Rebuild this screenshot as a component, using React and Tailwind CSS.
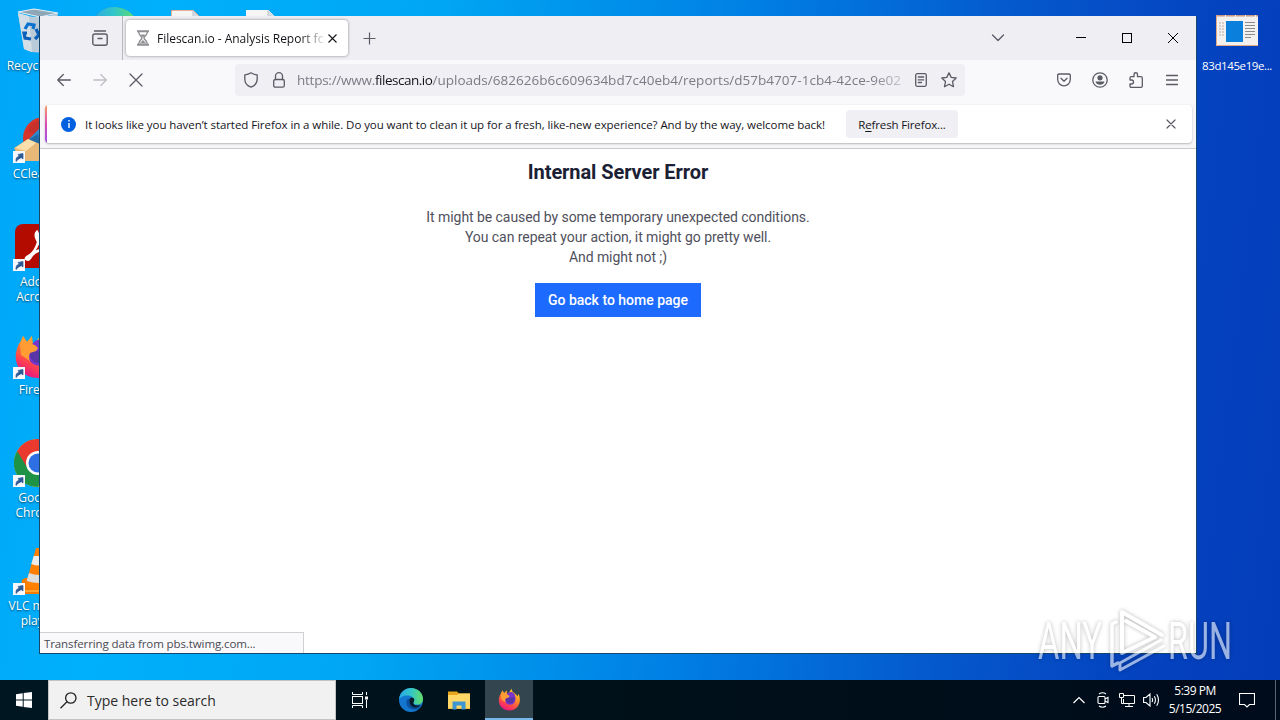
const ShortcutArrow = () => (
  <svg className="absolute -left-px bottom-0 w-3 h-3" viewBox="0 0 12 12">
    <rect width="12" height="12" fill="#f4f7fb" />
    <path d="M3 10.5C2.6 7.5 4 5.5 6.3 5L5 3.5 10 2.5V8L8.5 6.8C6.5 7 5 8.5 3 10.5Z" fill="#2c5a94" stroke="#2c5a94" strokeWidth="0.7" />
  </svg>
);

const RecycleBinArt = () => (
  <svg className="w-12 h-12" viewBox="0 0 48 48">
    <path d="M4 6L10 42Q24 49 38 42L44 6Q24 14 4 6Z" fill="#b9cbd8" />
    <path d="M4 6L10 42Q14 44 18 45L15 9Z" fill="#d3dee6" />
    <path d="M4 5L20 2 44 6 26 10Z" fill="#8ea6b5" stroke="#e5edf2" strokeWidth="1.2" />
    <path d="M11 22l3-5 6 1-1 4" fill="none" stroke="#0b73cf" strokeWidth="3.2" />
    <path d="M22 22l3 6-4 4M17 32l-6-1-1-5 3 0" fill="none" stroke="#0b5fb8" strokeWidth="3.2" />
  </svg>
);

const CCleanerArt = () => (
  <svg className="w-12 h-12" viewBox="0 0 48 48">
    <circle cx="30" cy="23" r="21" fill="#d7352b" />
    <path d="M13 16Q19 5 30 4L32 12 20 19Z" fill="#c8302b" />
    <path d="M13 26L27 12 37 15 27 34Z" fill="#2b8bd0" />
    <path d="M13 26L24 19 27 34Z" fill="#216aa8" />
    <path d="M0 33L14 24 26 29 34 41 30 46H10Q2 38 0 33Z" fill="#e8b878" />
    <path d="M1 33L14 24 22 28 12 36Z" fill="#fbdfad" />
  </svg>
);

const AcrobatArt = () => (
  <svg className="w-12 h-12" viewBox="0 0 48 48">
    <rect x="1" y="1" width="46" height="44" rx="8" fill="#b30b00" />
    <path d="M13 34C20 31 28 18 23 9C19 13 27 27 37 29C29 24 20 28 16 35C14 38 10 36 13 34Z" fill="none" stroke="#fff" strokeWidth="2.6" />
  </svg>
);

const FirefoxArt = ({ className, id }) => (
  <svg className={className} viewBox="0 0 48 48">
    <defs>
      <linearGradient id={id} x1="0.8" y1="0" x2="0.3" y2="1">
        <stop offset="0" stopColor="#ffe226" />
        <stop offset="0.4" stopColor="#ff9124" />
        <stop offset="0.75" stopColor="#ff4050" />
        <stop offset="1" stopColor="#e31587" />
      </linearGradient>
    </defs>
    <path d="M29 1C27 8 36 10 41 17L43 12C51 31 40 47 24 47C9 47 0 35 2 22C3 16 5 12 7 10L9 5 13 11 18 5 19 13C24 10 25 5 29 1Z" fill={`url(#${id})`} />
    <path d="M17 18C17 10 25 7 30 9C37 13 38 22 35 29C31 37 20 36 16 30C12 25 14 20 17 18Z" fill="#7a35cc" />
    <path d="M16 20Q26 21 34 19Q36 28 29 32C20 34 14 27 16 20Z" fill="#5a35a8" />
    <path d="M6 13L9 5 13 11 18 5 18 13Q22 14 24 17L22 20 16 22Q14 26 16 30L7 24Z" fill="#ff9c34" />
  </svg>
);

const ChromeArt = () => (
  <svg className="w-12 h-12" viewBox="0 0 48 48">
    <circle cx="24" cy="24" r="24" fill="#fbc116" />
    <path d="M24 24L3.2 12A24 24 0 0 0 24 48L34 30Z" fill="#1e9346" />
    <path d="M24 12H44.8A24 24 0 0 0 3.2 12L14 30Z" fill="#ea3a2e" />
    <circle cx="24" cy="24" r="12" fill="#fff" />
    <circle cx="24" cy="24" r="9.5" fill="#2f6fe4" />
  </svg>
);

const VlcArt = () => (
  <svg className="w-12 h-12" viewBox="0 0 48 48">
    <path d="M11 31H39L46 47H6L8 33Z" fill="#f57c00" />
    <path d="M22 1H28L39 40Q25 45 11 40Z" fill="#ff8000" />
    <path d="M19.7 9H30.3L32.6 17Q25 20 17.3 17Z" fill="#ececec" />
    <path d="M15 26Q25 30 35 26L37.4 34Q25 38 12.6 34Z" fill="#dedede" />
    <path d="M6 43H46V45H6Z" fill="#ffa431" />
  </svg>
);

const DesktopIcon = ({ top, label, shortcut, children }) => (
  <div className={`absolute left-0 w-[76px] flex flex-col items-center ${top}`}>
    <div className="relative w-12 h-12">
      {children}
      {shortcut && <ShortcutArrow />}
    </div>
    <p className="mt-[3px] text-center text-xs leading-[15px] text-white whitespace-pre-line [text-shadow:0_1px_2px_rgba(0,0,0,0.6)]">
      {label}
    </p>
  </div>
);

const EdgeArt = ({ className, id }) => (
  <svg className={className} viewBox="0 0 48 48">
    <defs>
      <linearGradient id={id} x1="0" y1="0.3" x2="1" y2="0.3">
        <stop offset="0" stopColor="#2aa6e4" />
        <stop offset="0.5" stopColor="#32c6c9" />
        <stop offset="1" stopColor="#66dd65" />
      </linearGradient>
    </defs>
    <circle cx="24" cy="24" r="24" fill="#1477cf" />
    <path d="M0 23C2 8 12 0 24 0C38 0 48 10 48 22C48 30 42 34 35 33C29 33 27 30 30 26C30 19 24 15 16 15C8 15 2 19 0 23Z" fill={`url(#${id})`} />
    <path d="M17 22C11 31 17 43 31 43Q39 43 44 36C35 41 24 37 23 28Q23 24 26 21Z" fill="#0c4f9c" />
    <path d="M21 27Q20 19 27 19Q32 21 30 27Q27 30 30 33Q33 36 44 34Q34 43 25 36Q21 32 21 27Z" fill="#051c2a" />
  </svg>
);

const SheetPeek = ({ className, edge }) => (
  <svg className={`absolute w-8 h-8 ${className}`} viewBox="0 0 32 32">
    <path d="M0 0H22L30 8V32H0Z" fill="#f5f5f5" stroke={edge} />
    <path d="M22 0V8H30" fill="#d5dbe2" stroke="#b9c2cb" />
  </svg>
);

const iconBase = 'fill-none stroke-[#5b5b66] [stroke-linecap:round] [stroke-linejoin:round]';

const TabStrip = () => (
  <div className="flex h-11 shrink-0 items-center bg-[#efeef3]">
    <div className="flex h-full w-[83px] items-center justify-end border-r border-[#b7b7bf] pr-3.5">
      <svg className={`w-4 h-4 ${iconBase}`} viewBox="0 0 16 16" strokeWidth="1.4">
        <path d="M2.5 1H13.5" />
        <rect x="0.8" y="4" width="14.4" height="11.2" rx="2" />
        <path d="M6 8.5H10" />
      </svg>
    </div>
    <div className="ml-[3px] flex h-9 w-[222px] items-center rounded bg-white pl-[11px] pr-3 shadow-[0_0_3px_rgba(0,0,0,0.45)]">
      <svg className="h-4 w-3 shrink-0 fill-none stroke-[#8f8f94]" viewBox="0 0 12 16">
        <path d="M0 1.2H12M0 14.8H12" strokeWidth="2" />
        <path d="M1.7 2C1.7 6 5 6 5 8C5 10 1.7 10 1.7 14M10.3 2C10.3 6 7 6 7 8C7 10 10.3 10 10.3 14" strokeWidth="1.4" />
        <path d="M3.5 4.5H8.5L6 7.5ZM2.5 13.5L6 10 9.5 13.5Z" fill="#8f8f94" stroke="none" />
      </svg>
      <span className="ml-2 w-[166px] shrink-0 overflow-hidden whitespace-nowrap pt-0.5 text-xs tracking-[-0.02px] text-[#15141a] [mask-image:linear-gradient(to_right,#000_143px,transparent_170px)]">
        Filescan.io - Analysis Report for
      </span>
      <svg className="ml-[5px] h-[9px] w-[9px] shrink-0 fill-none stroke-[#15141a]" viewBox="0 0 9 9" strokeWidth="1.1">
        <path d="M0.5 0.5L8.5 8.5M8.5 0.5L0.5 8.5" />
      </svg>
    </div>
    <svg className="ml-[15px] w-[13px] h-[13px] fill-none stroke-[#5b5b66]" viewBox="0 0 13 13" strokeWidth="1.2">
      <path d="M6.5 0.5V12.5M0.5 6.5H12.5" />
    </svg>
    <div className="ml-auto flex items-center pr-[18px]">
      <svg className={`mr-[71px] h-3 w-3.5 ${iconBase}`} viewBox="0 0 14 12" strokeWidth="1.3">
        <path d="M1.5 3L7 8.5 12.5 3" />
      </svg>
      <svg className="mr-9 h-2.5 w-2.5 fill-none stroke-black" viewBox="0 0 10 10">
        <path d="M0 4.5H10" />
      </svg>
      <svg className="mr-9 h-2.5 w-2.5 fill-none stroke-black" viewBox="0 0 10 10">
        <rect x="0.5" y="0.5" width="9" height="9" />
      </svg>
      <svg className="h-2.5 w-2.5 fill-none stroke-black" viewBox="0 0 10 10">
        <path d="M0 0L10 10M10 0L0 10" />
      </svg>
    </div>
  </div>
);

const AddressBar = () => (
  <div className="flex h-8 w-[730px] items-center rounded bg-[#f0eff4] pl-[9px] pr-2">
    <svg className={`h-4 w-3.5 shrink-0 ${iconBase}`} viewBox="0 0 14 16" strokeWidth="1.3">
      <path d="M7 0.8C9 2.2 11 2.7 13.2 2.9V7C13.2 11 10.5 14 7 15.2C3.5 14 0.8 11 0.8 7V2.9C3 2.7 5 2.2 7 0.8Z" />
    </svg>
    <svg className={`ml-[15px] h-4 w-3 shrink-0 ${iconBase}`} viewBox="0 0 12 16" strokeWidth="1.3">
      <rect x="0.7" y="7.5" width="10.6" height="7.7" rx="1.5" />
      <path d="M2.5 7.5V4.2A3.5 3.5 0 0 1 9.5 4.2V7.5" />
    </svg>
    <p className="ml-3 w-[609px] shrink-0 overflow-hidden whitespace-nowrap pt-px text-[13.5px] tracking-[-0.25px] text-[#7b7b84] [mask-image:linear-gradient(to_right,#000_575px,transparent_620px)]">
      https://www.<span className="tracking-[-0.48px] text-[#15141a]">filescan.io</span>
      <span className="tracking-[0.02px]">/uploads/682626b6c609634bd7c40eb4/reports/d57b4707-1cb4-42ce-9e02</span>
    </p>
    <svg className={`ml-[9px] h-3.5 w-3 shrink-0 ${iconBase}`} viewBox="0 0 12 14" strokeWidth="1.3">
      <rect x="0.7" y="0.7" width="10.6" height="12.6" rx="1.5" />
      <path d="M3.3 4H8.7M3.3 6.8H8.7M3.3 9.5H6.5" />
    </svg>
    <svg className={`ml-3.5 h-4 w-4 shrink-0 ${iconBase}`} viewBox="0 0 16 16" strokeWidth="1.3">
      <path d="M8 0.8L10.2 5.4 15.2 6 11.5 9.5 12.5 14.7 8 12.2 3.5 14.7 4.5 9.5 0.8 6 5.8 5.4Z" />
    </svg>
  </div>
);

const NavBar = () => (
  <div className="flex h-11 shrink-0 items-start bg-[#f9f9fb] pt-1">
    <div className="flex h-8 w-[195px] items-center gap-[22px] pl-[17px]">
      <svg className={`h-3.5 w-3.5 ${iconBase}`} viewBox="0 0 14 14" strokeWidth="1.3">
        <path d="M13.3 7H0.8M6.3 1.5L0.8 7 6.3 12.5" />
      </svg>
      <svg className="h-3.5 w-3.5 fill-none stroke-[#bfbfc6] [stroke-linecap:round]" viewBox="0 0 14 14" strokeWidth="1.3">
        <path d="M0.8 7H13.3M7.8 1.5L13.3 7 7.8 12.5" />
      </svg>
      <svg className={`h-3.5 w-3.5 ${iconBase}`} viewBox="0 0 14 14" strokeWidth="1.3">
        <path d="M1 1L13 13M13 1L1 13" />
      </svg>
    </div>
    <AddressBar />
    <div className="ml-auto flex h-8 items-center gap-[21px] pr-[18px]">
      <svg className={`h-3.5 w-3.5 ${iconBase}`} viewBox="0 0 14 14" strokeWidth="1.3">
        <path d="M2 1H12Q13.3 1 13.3 2.3V6.5A6.3 6.3 0 0 1 0.7 6.5V2.3Q0.7 1 2 1Z" />
        <path d="M4 5.3L7 8.2 10 5.3" />
      </svg>
      <svg className="h-4 w-4 fill-none stroke-[#5b5b66]" viewBox="0 0 16 16" strokeWidth="1.3">
        <circle cx="8" cy="8" r="7.2" />
        <circle cx="8" cy="5.8" r="2.6" fill="#5b5b66" stroke="none" />
        <path d="M3.5 9.5H12.5Q11.5 12.7 8 12.7T3.5 9.5Z" fill="#5b5b66" stroke="none" />
      </svg>
      <svg className={`h-4 w-3.5 ${iconBase}`} viewBox="0 0 14 16" strokeWidth="1.3">
        <path d="M1 8V6Q1 4.7 2.3 4.7H5V2.5A1.7 1.7 0 0 1 8.5 2.5V4.7H12Q13.3 4.7 13.3 6V14Q13.3 15.3 12 15.3H2.3Q1 15.3 1 14V12H2.5A1.8 1.8 0 0 0 2.5 8Z" />
      </svg>
      <svg className={`ml-0.5 h-3 w-3 ${iconBase}`} viewBox="0 0 12 12" strokeWidth="1.3">
        <path d="M0.5 1.5H11.5M0.5 6H11.5M0.5 10.5H11.5" />
      </svg>
    </div>
  </div>
);

const Notification = () => (
  <div className="h-[45px] shrink-0 border-b border-[#c9c9ce] bg-[#f6f6f8] pl-[5px] pr-1 pt-px">
    <div className="flex h-[38px] items-center overflow-hidden rounded bg-white shadow-[0_1px_2px_rgba(0,0,0,0.25)]">
      <div className="h-full w-0.5 bg-linear-to-b from-[#ff9a55] via-[#d94ab4] to-[#9a4de8]" />
      <div className="ml-3.5 flex h-[15px] w-[15px] items-center justify-center rounded-full bg-[#0060df]">
        <svg className="h-2 w-0.5 fill-white" viewBox="0 0 2 8">
          <path d="M0.3 0H1.7V1.5H0.3ZM0.3 3H1.7V8H0.3Z" />
        </svg>
      </div>
      <p className="ml-[9px] w-[744px] whitespace-nowrap pt-0.5 text-[11.5px] tracking-[-0.07px] text-[#15141a]">
        It looks like you haven’t started Firefox in a while. Do you want to clean it up for a fresh, like-new experience? And by the way, welcome back!
      </p>
      <button className="ml-[17px] h-7 w-28 rounded bg-[#f0eff4] pt-0.5 text-[11.5px] tracking-[-0.14px] text-[#15141a]">
        R<span className="underline underline-offset-2">e</span>fresh Firefox...
      </button>
      <svg className={`ml-auto mr-4 h-2.5 w-2.5 ${iconBase}`} viewBox="0 0 10 10" strokeWidth="1.2">
        <path d="M1 1L9 9M9 1L1 9" />
      </svg>
    </div>
  </div>
);

const ErrorPage = () => (
  <main className="flex flex-1 flex-col items-center bg-white font-['Roboto',sans-serif]">
    <h1 className="mt-[9px] text-[20px] leading-7 font-bold tracking-[-0.08px] text-[#1b2134]">Internal Server Error</h1>
    <p className="mt-[21px] text-center text-sm leading-5 tracking-[-0.06px] text-[#4f505c]">
      It might be caused by some temporary unexpected conditions.
      <br />
      You can repeat your action, it might go pretty well.
      <br />
      And might not ;)
    </p>
    <button className="mt-4 h-[34px] w-[166px] bg-[#1d6bfe] text-sm font-medium text-white">Go back to home page</button>
    <div className="mt-auto flex h-[21px] w-[264px] items-center self-start border-t border-r border-[#cfcfd4] bg-[#f9f9fb] pl-1 pt-0.5 font-['Open_Sans',sans-serif] text-[11.5px] tracking-[-0.1px] text-[#4a4a52]">
      Transferring data from pbs.twimg.com...
    </div>
  </main>
);

const BrowserWindow = () => (
  <div className="absolute left-[39px] top-4 flex h-[638px] w-[1158px] flex-col border-x border-b border-[#17476b] bg-white">
    <TabStrip />
    <NavBar />
    <Notification />
    <ErrorPage />
  </div>
);

const Watermark = () => (
  <svg
    className="absolute left-[1036px] top-[604px] h-[72px] w-[200px] opacity-60 drop-shadow-[0_0_2px_rgba(0,0,0,0.45)]"
    viewBox="0 -2 200 72"
  >
    <g fill="#fff" fontFamily="Roboto, sans-serif" fontSize="51">
      <text x="2" y="53" textLength="64" lengthAdjust="spacingAndGlyphs">ANY</text>
      <text x="132" y="53" textLength="64" lengthAdjust="spacingAndGlyphs">RUN</text>
    </g>
    <g fill="none" stroke="#fff" strokeLinejoin="round" strokeLinecap="round">
      <path d="M86 47V6L126 29M90 15L119 31 86 47" strokeWidth="4" />
      <path d="M80 16L76 18V60L82 57" strokeWidth="3.5" />
      <path d="M125 34L84 57V64L128 40" strokeWidth="3" />
    </g>
  </svg>
);

const Taskbar = () => (
  <footer className="flex h-10 shrink-0 bg-linear-to-r from-[#001722] via-[#001019] to-[#000b1b] text-white">
    <button className="flex w-12 items-center justify-center">
      <svg className="h-4 w-4 fill-white" viewBox="0 0 16 16">
        <path d="M0 2.3L6.7 1.3V7.5H0ZM7.7 1.1L16 0V7.5H7.7ZM0 8.5H6.7V14.7L0 13.7ZM7.7 8.5H16V16L7.7 14.9Z" />
      </svg>
    </button>
    <div className="flex w-72 items-center border border-[#c2c2c2] bg-[#f1f1f1] pl-[11px] text-[#2b2b2b]">
      <svg className="h-[17px] w-[17px] fill-none stroke-[#222]" viewBox="0 0 17 17" strokeWidth="1.3">
        <circle cx="10.8" cy="6" r="5.2" />
        <path d="M7 9.8L0.5 16.3" />
      </svg>
      <span className="ml-2.5 whitespace-nowrap text-[14px]">Type here to search</span>
    </div>
    <div className="flex">
      <div className="flex w-12 items-center justify-center">
        <svg className="h-4 w-4 fill-none stroke-white" viewBox="0 0 16 16">
          <path d="M0.5 0V2.5H10.5V0M0.5 16V13.5H10.5V16M14.5 0V3M14.5 8V16" />
          <rect x="0.5" y="4.5" width="10" height="7" />
          <rect x="13" y="4.5" width="3" height="3" fill="#fff" stroke="none" />
        </svg>
      </div>
      <div className="ml-[3px] flex w-12 items-center justify-center">
        <EdgeArt className="h-6 w-6" id="edge-task" />
      </div>
      <div className="mr-0.5 flex w-12 items-center justify-center">
        <svg className="h-[19px] w-[22px]" viewBox="0 0 22 19">
          <path d="M0 0.5H9L11 2.5H22V18H0Z" fill="#e7a51c" />
          <path d="M0 4H9L11 2.5H22V17.5H0Z" fill="#ffd767" />
          <path d="M4.5 10.5H17.5V18.5H13.5V14.5H8.5V18.5H4.5Z" fill="#3d95d2" />
        </svg>
      </div>
      <div className="flex w-12 items-center justify-center border-b-2 border-[#78b8ed] bg-[#33454f]">
        <FirefoxArt className="h-[23px] w-[23px]" id="fox-task" />
      </div>
    </div>
    <div className="ml-auto flex items-center">
      <svg className="h-3 w-3 fill-none stroke-white" viewBox="0 0 12 12" strokeWidth="1.2">
        <path d="M0.5 9L6 3.5 11.5 9" />
      </svg>
      <svg className="ml-3 h-4 w-3 fill-none stroke-white" viewBox="0 0 12 16" strokeWidth="1.1">
        <rect x="1" y="4.5" width="7" height="7" rx="1" />
        <path d="M8 7L11 5.5V10.5L8 9M2 2Q5.5 -0.5 9 2M2 14Q5.5 16.5 9 14" />
      </svg>
      <svg className="ml-2.5 h-4 w-4 fill-none stroke-white" viewBox="0 0 16 16">
        <path d="M5 3.5H15.5V11.5H4.5V7M10 11.5V14.5M6 14.5H14M0.5 1.5H4.5V5.5H0.5ZM2.5 5.5V11.5H4.5" />
      </svg>
      <svg className="ml-2 h-4 w-[17px] fill-none stroke-white" viewBox="0 0 17 16" strokeWidth="1.1">
        <path d="M0.6 5.5H3L7 2V14L3 10.5H0.6ZM9 6Q10.2 8 9 10M11.3 4.2Q13.6 8 11.3 11.8M13.7 2.3Q17.3 8 13.7 13.7" />
      </svg>
      <div className="ml-2 w-[54px] text-center text-xs leading-[18px] whitespace-nowrap">
        <p className="tracking-[-0.5px]">5:39 PM</p>
        <p className="tracking-[-0.5px]">5/15/2025</p>
      </div>
      <svg className="ml-[17px] h-4 w-4 fill-none stroke-white" viewBox="0 0 16 16" strokeWidth="1.1">
        <path d="M0.5 1.5H15.5V12.5H10.5L8 15 5.5 12.5H0.5Z" />
      </svg>
      <div className="ml-5 mr-1 h-10 w-px bg-[#5b6470]" />
    </div>
  </footer>
);

export default function App() {
  return (
    <div className="flex h-[720px] w-[1280px] flex-col overflow-hidden font-['Open_Sans',sans-serif]">
      <div className="relative flex-1 overflow-hidden bg-[linear-gradient(97deg,#00a6f8_0%,#00b0fc_12%,#00a6f4_32%,#0080e4_55%,#0556cb_76%,#0442bf_90%,#043dba_100%)]">
        <DesktopIcon top="top-[7px]" label="Recycle Bin"><RecycleBinArt /></DesktopIcon>
        <DesktopIcon top="top-[115px]" label="CCleaner" shortcut><CCleanerArt /></DesktopIcon>
        <DesktopIcon top="top-[223px]" label={'Adobe\nAcrobat'} shortcut><AcrobatArt /></DesktopIcon>
        <DesktopIcon top="top-[331px]" label="Firefox" shortcut>
          <FirefoxArt className="w-12 h-12" id="fox-desk" />
        </DesktopIcon>
        <DesktopIcon top="top-[439px]" label={'Google\nChrome'} shortcut><ChromeArt /></DesktopIcon>
        <DesktopIcon top="top-[547px]" label={'VLC media\nplayer'} shortcut><VlcArt /></DesktopIcon>

        <EdgeArt className="absolute left-[90px] top-[7px] h-12 w-12" id="edge-desk" />
        <SheetPeek className="left-[171px] top-2.5" edge="#d96b3a" />
        <SheetPeek className="left-[246px] top-2.5" edge="#f5f5f5" />

        <div className="absolute left-[1198px] top-[15px] flex w-[78px] flex-col items-center">
          <svg className="h-[31px] w-[42px]" viewBox="0 0 42 31">
            <rect width="42" height="31" fill="#f3f1ef" />
            <path d="M0 0.5H42" stroke="#c89883" strokeWidth="2" strokeDasharray="9 1" />
            <path d="M0.5 0V30.5H42" fill="none" stroke="#e3a983" />
            <rect x="10" y="6" width="17" height="21" fill="#0a7fdb" />
            <path d="M3 8H8M3 11H8M3 14H8M3 17H8M3 20H8" stroke="#b9aca4" strokeDasharray="2 1" />
            <path d="M29 7.5H39M29 10.5H39M29 13.5H39M29 16.5H39M29 19.5H39M29 22.5H35" stroke="#8b8b8b" />
          </svg>
          <p className="mt-3 text-[11.5px] leading-[15px] tracking-[-0.4px] whitespace-nowrap text-white">83d145e19e...</p>
        </div>

        <BrowserWindow />
        <Watermark />
      </div>
      <Taskbar />
    </div>
  );
}
